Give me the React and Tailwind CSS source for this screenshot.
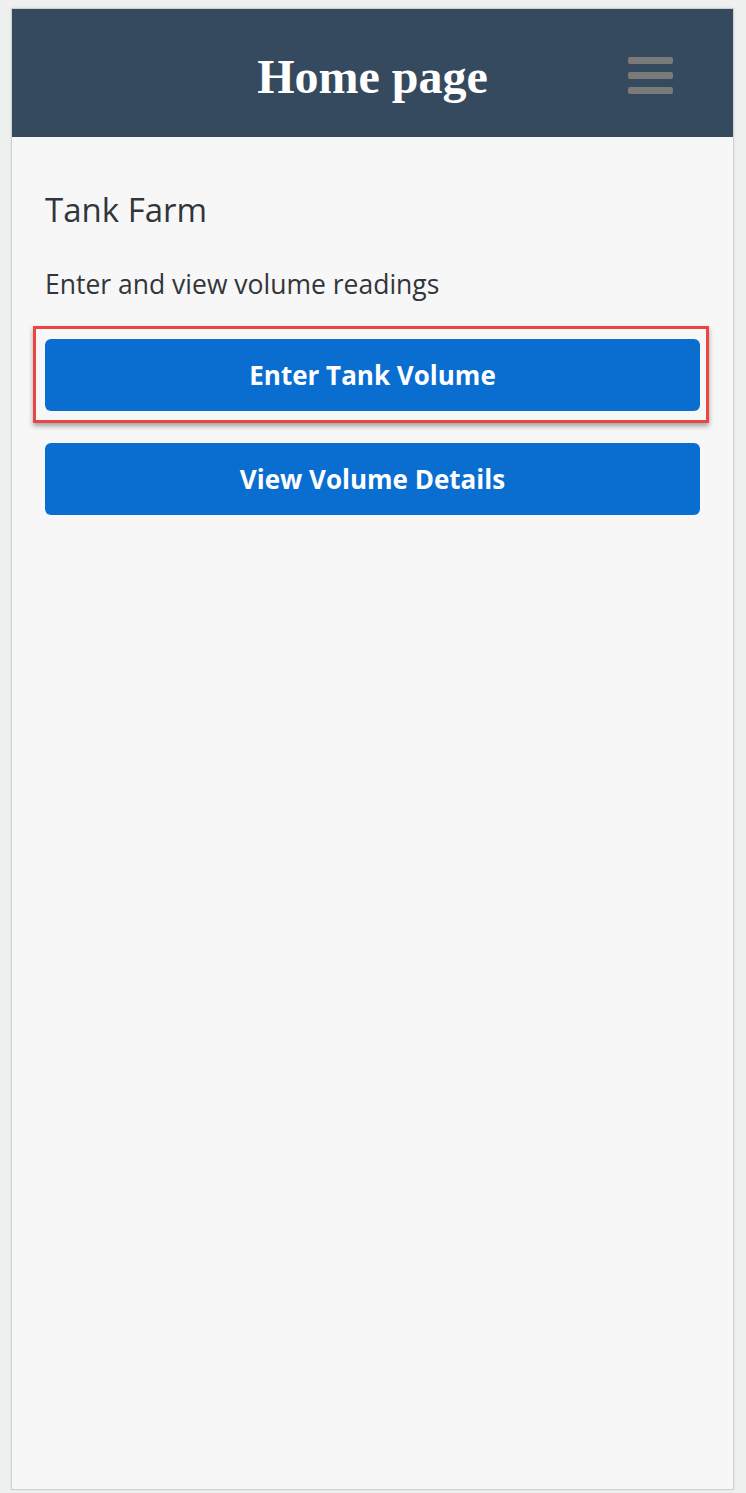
import React from "react";

const sans = { fontFamily: '"Open Sans", "Noto Sans", sans-serif' };

function MenuIcon() {
  return (
    <div className="flex w-[45px] flex-col gap-[8px]">
      <span className="block h-[7px] rounded-[2px] bg-[#7a7a7a]" />
      <span className="block h-[7px] rounded-[2px] bg-[#7a7a7a]" />
      <span className="block h-[7px] rounded-[2px] bg-[#7a7a7a]" />
    </div>
  );
}

function ActionButton({ label, highlight }) {
  return (
    <div className="relative">
      {highlight && (
        <div className="pointer-events-none absolute -top-[13px] -bottom-[12px] -left-[12px] -right-[9px] border-[3px] border-[#ec4545] shadow-[0_3px_5px_rgba(0,0,0,0.35)]" />
      )}
      <button
        type="button"
        className="flex h-[72px] w-full items-center justify-center rounded-[6px] bg-[#0a6ed1] text-[26px] font-bold text-white"
        style={sans}
      >
        {label}
      </button>
    </div>
  );
}

export default function App() {
  return (
    <div className="min-h-screen bg-[#eff1f0] pt-[8px] pl-[11px] pr-[12px] pb-[3px]">
      <div className="flex h-[1482px] flex-col border border-[#cfd1d0] bg-[#f7f7f7] shadow-[0_0_3px_rgba(0,0,0,0.08)]">
        <header className="relative flex h-[128px] items-center justify-center bg-[#364a5f] pt-[8px]">
          <h1
            className="text-[48px] font-bold leading-none text-white"
            style={{ fontFamily: '"Liberation Serif", "Times New Roman", serif' }}
          >
            Home page
          </h1>
          <div className="absolute right-[60px] top-[48px]">
            <MenuIcon />
          </div>
        </header>

        <main className="flex flex-col px-[33px] pt-[51px]" style={sans}>
          <h2 className="text-[33px] leading-[44px] text-[#32363a]">Tank Farm</h2>
          <p className="mt-[35px] text-[26.5px] leading-[34px] text-[#32363a]">
            Enter and view volume readings
          </p>
          <div className="mt-[38px] flex flex-col gap-[32px]">
            <ActionButton label="Enter Tank Volume" highlight />
            <ActionButton label="View Volume Details" />
          </div>
        </main>
      </div>
    </div>
  );
}
